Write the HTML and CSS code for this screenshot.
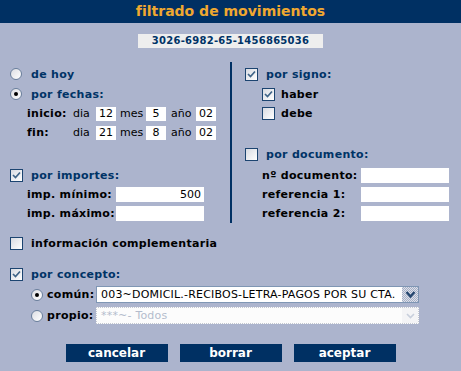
FILE: index.html
```html
<!DOCTYPE html>
<html lang="es">

<head>
    <meta charset="UTF-8">
    <title>filtrado de movimientos</title>
    <link rel="stylesheet" href="styles.css">
</head>

<body>
    <div class="header">
        <h1 class="title">filtrado de movimientos</h1>
    </div>

    <div class="account">3026-6982-65-1456865036</div>

    <div class="cols">
        <div class="col-left">
            <div class="row r20">
                <span class="radio"></span>
                <span class="head">de hoy</span>
            </div>
            <div class="row r20">
                <span class="radio on"></span>
                <span class="head">por fechas:</span>
            </div>
            <div class="row r19 sub">
                <span class="lbl date-lbl">inicio:</span>
                <span class="unit">dia</span><input class="field date" type="text" value="12">
                <span class="unit mes">mes</span><input class="field date" type="text" value="5">
                <span class="unit ano">año</span><input class="field date" type="text" value="02">
            </div>
            <div class="row r19 sub">
                <span class="lbl date-lbl">fin:</span>
                <span class="unit">dia</span><input class="field date" type="text" value="21">
                <span class="unit mes">mes</span><input class="field date" type="text" value="8">
                <span class="unit ano">año</span><input class="field date" type="text" value="02">
            </div>

            <div class="row r20 gap-imp">
                <span class="chk on"><svg width="11" height="11" viewBox="0 0 11 11"><path d="M2 5 L4.5 7.5 L9 2.5" fill="none" stroke="#3f6488" stroke-width="1.7"/></svg></span>
                <span class="head">por importes:</span>
            </div>
            <div class="row r19 sub">
                <span class="lbl imp-lbl">imp. mínimo:</span>
                <input class="field wide num" type="text" value="500">
            </div>
            <div class="row r19 sub">
                <span class="lbl imp-lbl">imp. máximo:</span>
                <input class="field wide" type="text">
            </div>
        </div>

        <div class="col-right">
            <div class="row r20">
                <span class="chk on"><svg width="11" height="11" viewBox="0 0 11 11"><path d="M2 5 L4.5 7.5 L9 2.5" fill="none" stroke="#3f6488" stroke-width="1.7"/></svg></span>
                <span class="head">por signo:</span>
            </div>
            <div class="row r20 sub">
                <span class="chk on"><svg width="11" height="11" viewBox="0 0 11 11"><path d="M2 5 L4.5 7.5 L9 2.5" fill="none" stroke="#3f6488" stroke-width="1.7"/></svg></span>
                <span class="lbl tight">haber</span>
            </div>
            <div class="row r19 sub">
                <span class="chk"></span>
                <span class="lbl tight">debe</span>
            </div>

            <div class="row r19 gap-doc">
                <span class="chk"></span>
                <span class="head">por documento:</span>
            </div>
            <div class="row r19 sub first-doc">
                <span class="lbl doc-lbl">nº documento:</span>
                <input class="field wide" type="text">
            </div>
            <div class="row r19 sub">
                <span class="lbl doc-lbl">referencia 1:</span>
                <input class="field wide" type="text">
            </div>
            <div class="row r19 sub">
                <span class="lbl doc-lbl">referencia 2:</span>
                <input class="field wide" type="text">
            </div>
        </div>
    </div>

    <div class="lower">
        <div class="row r19 gap-info">
            <span class="chk"></span>
            <span class="lbl">información complementaria</span>
        </div>
        <div class="row r19 gap-concepto">
            <span class="chk on"><svg width="11" height="11" viewBox="0 0 11 11"><path d="M2 5 L4.5 7.5 L9 2.5" fill="none" stroke="#3f6488" stroke-width="1.7"/></svg></span>
            <span class="head">por concepto:</span>
        </div>
        <div class="row r21 concepto">
            <span class="radio on"></span>
            <span class="lbl sel-lbl">común:</span>
            <div class="select">
                <span class="sel-text">003~DOMICIL.-RECIBOS-LETRA-PAGOS POR SU CTA.</span>
                <span class="sel-arrow"><svg width="13" height="11" viewBox="0 0 13 11"><path d="M2.5 3 L6.5 7.5 L10.5 3" fill="none" stroke="#23456e" stroke-width="2.2"/></svg></span>
            </div>
        </div>
        <div class="row r21 concepto">
            <span class="radio"></span>
            <span class="lbl sel-lbl">propio:</span>
            <div class="select off">
                <span class="sel-text">***~- Todos</span>
                <span class="sel-arrow"><svg width="13" height="11" viewBox="0 0 13 11"><path d="M3 4 L6.5 7.5 L10 4" fill="none" stroke="#c8cfdc" stroke-width="1.6"/></svg></span>
            </div>
        </div>
    </div>

    <div class="actions">
        <button class="btn">cancelar</button>
        <button class="btn">borrar</button>
        <button class="btn">aceptar</button>
    </div>
</body>

</html>
```

FILE: styles.css
```css
body {
    margin: 0;
    background-color: #acb4cd;
    font-family: "DejaVu Sans", Verdana, sans-serif;
    font-size: 11px;
    color: #000;
}

.header {
    height: 23px;
    background-color: #003063;
    text-align: center;
}

.title {
    margin: 0;
    font-size: 14px;
    line-height: 23px;
    font-weight: bold;
    color: #f0a830;
}

.account {
    width: 185px;
    height: 14px;
    margin: 11px auto 0;
    background-color: #eeeeee;
    color: #003366;
    font-size: 10px;
    font-weight: bold;
    line-height: 14px;
    letter-spacing: 0.25px;
    text-align: center;
}

.cols {
    display: flex;
    margin-top: 14px;
}

.col-left {
    width: 230px;
    padding: 2px 0 0 10px;
    box-sizing: border-box;
}

.col-right {
    flex: 1;
    border-left: 2px solid #003063;
    padding: 2px 0 0 13px;
}

/* filas */
.row {
    display: flex;
    align-items: center;
}

.r19 {
    height: 19px;
}

.r20 {
    height: 20px;
}

.r21 {
    height: 21px;
}

.sub {
    padding-left: 17px;
}

.gap-imp {
    margin-top: 23px;
}

.gap-doc {
    margin-top: 22px;
}

.first-doc {
    margin-top: 2px;
}

.head {
    color: #003366;
    font-weight: bold;
    letter-spacing: 0.3px;
    margin-left: 8px;
}

.radio + .head {
    margin-left: 9px;
}

.lbl {
    font-weight: bold;
    letter-spacing: 0.3px;
}

.chk + .lbl {
    margin-left: 8px;
}

.chk + .lbl.tight {
    margin-left: 6px;
}

/* controles */
.radio {
    position: relative;
    width: 12px;
    height: 12px;
    box-sizing: border-box;
    border: 1px solid #6a7f9c;
    border-radius: 50%;
    background: linear-gradient(135deg, #dcdde3, #ffffff);
    flex: none;
}

.radio.on::after {
    content: "";
    position: absolute;
    left: 3px;
    top: 3px;
    width: 4px;
    height: 4px;
    border-radius: 50%;
    background-color: #000;
}

.chk {
    display: flex;
    align-items: center;
    justify-content: center;
    width: 13px;
    height: 13px;
    box-sizing: border-box;
    border: 1px solid #1c4470;
    background: linear-gradient(135deg, #d8dbe2, #ffffff);
    flex: none;
}

.field {
    box-sizing: border-box;
    border: none;
    margin: 0;
    padding: 0 3px;
    background-color: #fff;
    font-family: "DejaVu Sans", Verdana, sans-serif;
    font-size: 11px;
    color: #000;
    outline: none;
}

.date {
    width: 20px;
    height: 14px;
    padding: 0;
    text-align: center;
}

.wide {
    width: 88px;
    height: 15px;
}

.num {
    text-align: right;
}

.date-lbl {
    width: 46px;
}

.unit {
    width: 23px;
}

.unit.mes {
    width: 26px;
    padding-left: 4px;
}

.unit.ano {
    width: 25px;
    padding-left: 5px;
}

.imp-lbl {
    width: 89px;
}

.doc-lbl {
    width: 99px;
}

/* parte baja */
.lower {
    padding-left: 10px;
}

.gap-info {
    margin-top: 11px;
}

.gap-concepto {
    margin-top: 12px;
}

.concepto {
    padding-left: 21px;
}

.sel-lbl {
    width: 49px;
    margin-left: 4px;
}

.select {
    display: flex;
    align-items: center;
    width: 323px;
    height: 17px;
    box-sizing: border-box;
    border: 1px solid #7f96b4;
    background-color: #fff;
}

.sel-text {
    flex: 1;
    padding-left: 4px;
    letter-spacing: 0.2px;
    white-space: nowrap;
    overflow: hidden;
}

.sel-arrow {
    display: flex;
    align-items: center;
    justify-content: center;
    width: 16px;
    height: 15px;
    background-color: #c0c7d8;
    background-image: repeating-conic-gradient(#a6afc6 0 25%, #dde1ea 0 50%);
    background-size: 2px 2px;
}

.select.off {
    border: 1px dotted #c4c8d0;
    background-color: #fcfcfc;
    color: #b4bccd;
}

.select.off .sel-arrow {
    background: #f4f4f6;
}

/* botones */
.actions {
    display: flex;
    justify-content: center;
    gap: 12px;
    margin-top: 18px;
}

.btn {
    width: 102px;
    height: 18px;
    padding: 0;
    border: none;
    background-color: #003063;
    color: #fff;
    font-family: "DejaVu Sans", Verdana, sans-serif;
    font-size: 12px;
    font-weight: bold;
    cursor: pointer;
}

.btn:hover {
    opacity: 0.9;
}
```
